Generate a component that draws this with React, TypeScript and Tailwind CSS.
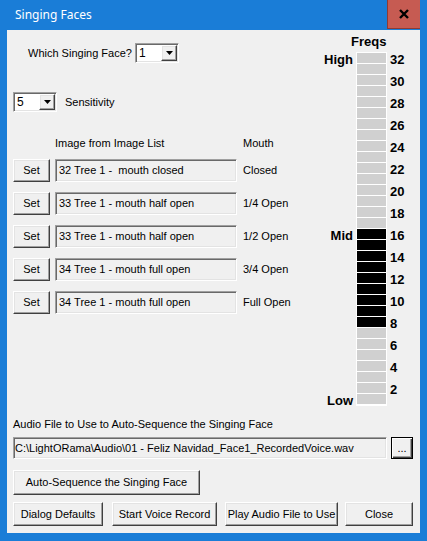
import React from "react";

const raised =
  "bg-[#f0f0f0] border border-t-white border-l-white border-r-[#404040] border-b-[#404040] shadow-[inset_-1px_-1px_0_#a0a0a0,inset_1px_1px_0_#e3e3e3]";
const sunken =
  "border border-t-[#a0a0a0] border-l-[#a0a0a0] border-r-white border-b-white shadow-[inset_1px_1px_0_#696969,inset_-1px_-1px_0_#e3e3e3]";

const rows = [
  { image: "32 Tree 1 -  mouth closed", mouth: "Closed" },
  { image: "33 Tree 1 - mouth half open", mouth: "1/4 Open" },
  { image: "33 Tree 1 - mouth half open", mouth: "1/2 Open" },
  { image: "34 Tree 1 - mouth full open", mouth: "3/4 Open" },
  { image: "34 Tree 1 - mouth full open", mouth: "Full Open" },
];

function Combo({ value }: { value: string }) {
  return (
    <div className={`flex h-[20px] w-[44px] bg-white ${sunken} p-px`}>
      <span className="flex-1 pl-[2px] leading-[16px] text-[12px]">{value}</span>
      <div className={`${raised} flex h-full w-[16px] items-center justify-center`}>
        <svg width="7" height="4" viewBox="0 0 7 4">
          <path d="M0 0h7L3.5 4z" fill="#000" />
        </svg>
      </div>
    </div>
  );
}

function Button({ label, className }: { label: string; className: string }) {
  return (
    <button className={`${raised} ${className} flex items-center justify-center text-[11px] text-black`}>
      {label}
    </button>
  );
}

export default function App() {
  const freqs = Array.from({ length: 32 }, (_, i) => 32 - i);

  return (
    <div className="flex h-[541px] w-[427px] flex-col bg-[#1a7dd7] font-['Liberation_Sans',Arial,sans-serif] text-[11px] text-black">
      {/* Title bar */}
      <div className="flex h-[30px] items-start">
        <span className="ml-[15px] mt-[6px] flex-1 font-['Noto_Sans',sans-serif] text-[12px] text-white">
          Singing Faces
        </span>
        <div className="mr-[7px] flex h-[29px] w-[33px] items-center justify-center border-b border-l border-[#8e3b34] bg-[#c65b52]">
          <svg width="10" height="10" viewBox="0 0 10 10">
            <path d="M1 1l8 8M9 1l-8 8" stroke="#000" strokeWidth="2.4" />
          </svg>
        </div>
      </div>

      {/* Client area */}
      <div className="mx-[7px] mb-[8px] flex flex-1 flex-col bg-[#f0f0f0] pl-[6px] pr-[7px]">
        <div className="flex">
          {/* Left column */}
          <div className="flex flex-1 flex-col">
            <div className="mt-[13px] flex h-[20px] items-center">
              <span className="ml-[15px] w-[107px]">Which Singing Face?</span>
              <Combo value="1" />
            </div>
            <div className="mt-[29px] flex h-[20px] items-center">
              <Combo value="5" />
              <span className="ml-[8px]">Sensitivity</span>
            </div>
            <div className="mt-[23px] flex h-[16px] items-center">
              <span className="ml-[42px] w-[188px]">Image from Image List</span>
              <span>Mouth</span>
            </div>
            <div className="mt-[8px] flex flex-col gap-[10px]">
              {rows.map((r, i) => (
                <div key={i} className="flex h-[23px] items-center">
                  <Button label="Set" className="h-[23px] w-[37px]" />
                  <div className={`ml-[5px] flex h-[23px] w-[182px] items-center whitespace-pre ${sunken} pl-[3px]`}>
                    {r.image}
                  </div>
                  <span className="ml-[6px]">{r.mouth}</span>
                </div>
              ))}
            </div>
          </div>

          {/* Freq meter */}
          <div className="flex w-[92px] flex-col font-bold text-[13px]">
            <div className="ml-[30px] mt-[4px] h-[15px] leading-[15px]">Freqs</div>
            <div className="mt-[3px] flex">
              <div className="flex w-[32px] flex-col pt-[2px] text-right">
                {freqs.map((f) => (
                  <div key={f} className="h-[11px] leading-[11px]">
                    {f === 32 ? "High" : f === 16 ? "Mid" : f === 1 ? "Low" : ""}
                  </div>
                ))}
              </div>
              <div className="ml-[3px] flex w-[31px] flex-col gap-px bg-white p-px">
                {freqs.map((f) => (
                  <div
                    key={f}
                    className={`h-[10px] ${f <= 16 && f >= 8 ? "bg-black" : "bg-[#d0d0d0]"}`}
                  />
                ))}
              </div>
              <div className="ml-[3px] flex flex-col pt-[2px]">
                {freqs.map((f) => (
                  <div key={f} className="h-[11px] leading-[11px]">
                    {f % 2 === 0 ? f : ""}
                  </div>
                ))}
              </div>
            </div>
          </div>
        </div>

        {/* Audio file */}
        <div className="mt-[11px] h-[14px] leading-[14px]">
          Audio File to Use to Auto-Sequence the Singing Face
        </div>
        <div className="mt-[6px] flex items-center">
          <div className={`flex h-[22px] w-[374px] items-center ${sunken} pl-[1px]`}>
            C:\LightORama\Audio\01 - Feliz Navidad_Face1_RecordedVoice.wav
          </div>
          <button className="ml-[4px] flex h-[22px] w-[22px] items-center justify-center border border-black bg-[#f0f0f0] text-[11px] shadow-[inset_1px_1px_0_#fff,inset_-1px_-1px_0_#404040,inset_-2px_-2px_0_#a0a0a0]">
            ...
          </button>
        </div>
        <Button label="Auto-Sequence the Singing Face" className="mt-[11px] h-[25px] w-[187px]" />
        <div className="mt-[7px] flex">
          <Button label="Dialog Defaults" className="h-[24px] w-[90px]" />
          <Button label="Start Voice Record" className="ml-[9px] h-[24px] w-[105px]" />
          <Button label="Play Audio File to Use" className="ml-[8px] h-[24px] w-[113px]" />
          <Button label="Close" className="ml-[7px] h-[24px] w-[68px]" />
        </div>
      </div>
    </div>
  );
}
